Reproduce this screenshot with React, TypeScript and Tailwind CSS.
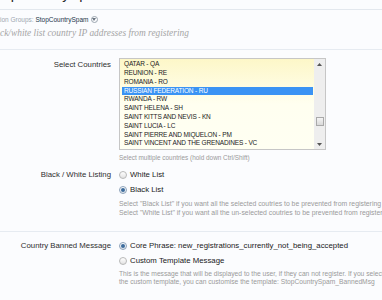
import React from "react";

const countries = [
  "QATAR - QA",
  "REUNION - RE",
  "ROMANIA - RO",
  "RUSSIAN FEDERATION - RU",
  "RWANDA - RW",
  "SAINT HELENA - SH",
  "SAINT KITTS AND NEVIS - KN",
  "SAINT LUCIA - LC",
  "SAINT PIERRE AND MIQUELON - PM",
  "SAINT VINCENT AND THE GRENADINES - VC",
];

function Radio({ checked }: { checked?: boolean }) {
  return (
    <span
      className={
        checked
          ? "w-[8px] h-[8px] rounded-full border border-[#8ea3ba] bg-gradient-to-b from-[#ffffff] to-[#dfe4ea] flex items-center justify-center shrink-0"
          : "w-[8px] h-[8px] rounded-full border border-[#b8b8b8] bg-gradient-to-b from-[#ffffff] to-[#e2e2e2] flex items-center justify-center shrink-0"
      }
    >
      {checked ? <span className="w-[4px] h-[4px] rounded-full bg-[#3d6c9c]" /> : null}
    </span>
  );
}

function RadioRow({ checked, children }: { checked?: boolean; children: React.ReactNode }) {
  return (
    <div className="h-[15px] flex items-center">
      <div className="w-[3px] shrink-0" />
      <Radio checked={checked} />
      <span className="ml-[3px] text-[7.8px] leading-[15px] text-[#1a1a1a] whitespace-nowrap">{children}</span>
    </div>
  );
}

export default function App() {
  return (
    <div className="w-[382px] h-[300px] overflow-hidden bg-[#fbfcfe] font-['Liberation_Sans',Arial,sans-serif] text-[#333]">
      <div className="h-[10px] flex border-b border-[#e3e8ee]">
        <h1 className="-mt-[13.5px] -ml-[11px] text-[14.5px] leading-[14px] text-[#2a2a2a] whitespace-nowrap">
          StopCountrySpam
        </h1>
      </div>
      <div className="mt-[5.5px] h-[8px] flex items-center -ml-[10.5px] text-[6.5px] leading-[8px] whitespace-nowrap">
        <span className="text-[#a0a8b2]">Option Groups:&nbsp;</span>
        <span className="text-[#23364a]">StopCountrySpam</span>
        <span className="ml-[2px] w-[7px] h-[7px] rounded-full border border-[#9aa4ae] flex items-center justify-center">
          <svg width="4" height="3" viewBox="0 0 4 3">
            <path d="M0 0 L4 0 L2 3 Z" fill="#6b7580" />
          </svg>
        </span>
      </div>
      <div className="mt-[3.5px] h-[12px] -ml-[13px] font-['Liberation_Serif',serif] italic text-[9.4px] leading-[12px] text-[#a5a5a5] whitespace-nowrap">
        Block/white list country IP addresses from registering
      </div>

      <div className="mt-[10px] border-t border-[#e6ebf1] pt-[8px]">
        <div className="flex gap-[8px]">
          <div className="w-[111px] shrink-0 text-right text-[7.8px] leading-[10px] mt-[1.7px] text-[#2e2e2e]">
            Select Countries
          </div>
          <div className="flex-1 min-w-0">
            <div className="w-[207px] h-[92px] border border-[#c6c6c6] flex bg-gradient-to-b from-[#fdf7c8] via-[#fffff0] to-[#fffff2]">
              <div className="flex-1 pl-[2px] pt-[1.3px] pr-[1px]">
                {countries.map((c) => (
                  <div
                    key={c}
                    className={
                      c === "RUSSIAN FEDERATION - RU"
                        ? "h-[8.8px] leading-[8.8px] pl-[2px] bg-[#3a93f4] text-white text-[6.5px] tracking-[-0.15px] whitespace-nowrap"
                        : "h-[8.8px] leading-[8.8px] pl-[2px] text-[#222] text-[6.5px] tracking-[-0.15px] whitespace-nowrap"
                    }
                  >
                    {c}
                  </div>
                ))}
              </div>
              <div className="w-[11px] shrink-0 bg-[#eeeeee] flex flex-col items-center">
                <svg width="5" height="3" viewBox="0 0 5 3" className="mt-[4px]">
                  <path d="M0 3 L5 3 L2.5 0 Z" fill="#555" />
                </svg>
                <div className="mt-[51px] w-[8px] h-[9px] border border-[#a9a9a9] bg-gradient-to-b from-[#f4f4f4] to-[#d9d9d9]" />
                <div className="flex-1" />
                <svg width="5" height="3" viewBox="0 0 5 3" className="mb-[3px]">
                  <path d="M0 0 L5 0 L2.5 3 Z" fill="#555" />
                </svg>
              </div>
            </div>
            <div className="mt-[4px] text-[6.4px] leading-[8px] text-[#9a9a9a] whitespace-nowrap">
              Select multiple countries (hold down Ctrl/Shift)
            </div>
          </div>
        </div>

        <div className="mt-[5px] flex gap-[8px] pb-[14px]">
          <div className="w-[111px] shrink-0 text-right text-[7.8px] leading-[15px] text-[#2e2e2e]">
            Black / White Listing
          </div>
          <div className="flex-1 min-w-0 -ml-[3px]">
            <RadioRow>White List</RadioRow>
            <RadioRow checked>Black List</RadioRow>
            <div className="mt-[1.5px] pl-[3px] text-[6.85px] leading-[9px] text-[#9a9a9a] whitespace-nowrap">
              <div>Select "Black List" if you want all the selected coutries to be prevented from registering</div>
              <div>Select "White List" if you want all the un-selected coutries to be prevented from registering</div>
            </div>
          </div>
        </div>
      </div>

      <div className="border-t border-[#e6ebf1] pt-[6.5px]">
        <div className="flex gap-[8px]">
          <div className="w-[111px] shrink-0 text-right text-[7.8px] leading-[15px] text-[#2e2e2e]">
            Country Banned Message
          </div>
          <div className="flex-1 min-w-0 -ml-[3px]">
            <RadioRow checked>Core Phrase: new_registrations_currently_not_being_accepted</RadioRow>
            <RadioRow>Custom Template Message</RadioRow>
            <div className="mt-[1.5px] pl-[3px] text-[6.7px] leading-[8px] text-[#9a9a9a] whitespace-nowrap">
              <div>This is the message that will be displayed to the user, if they can not register. If you select</div>
              <div>the custom template, you can customise the template: StopCountrySpam_BannedMsg</div>
            </div>
          </div>
        </div>
      </div>
    </div>
  );
}
